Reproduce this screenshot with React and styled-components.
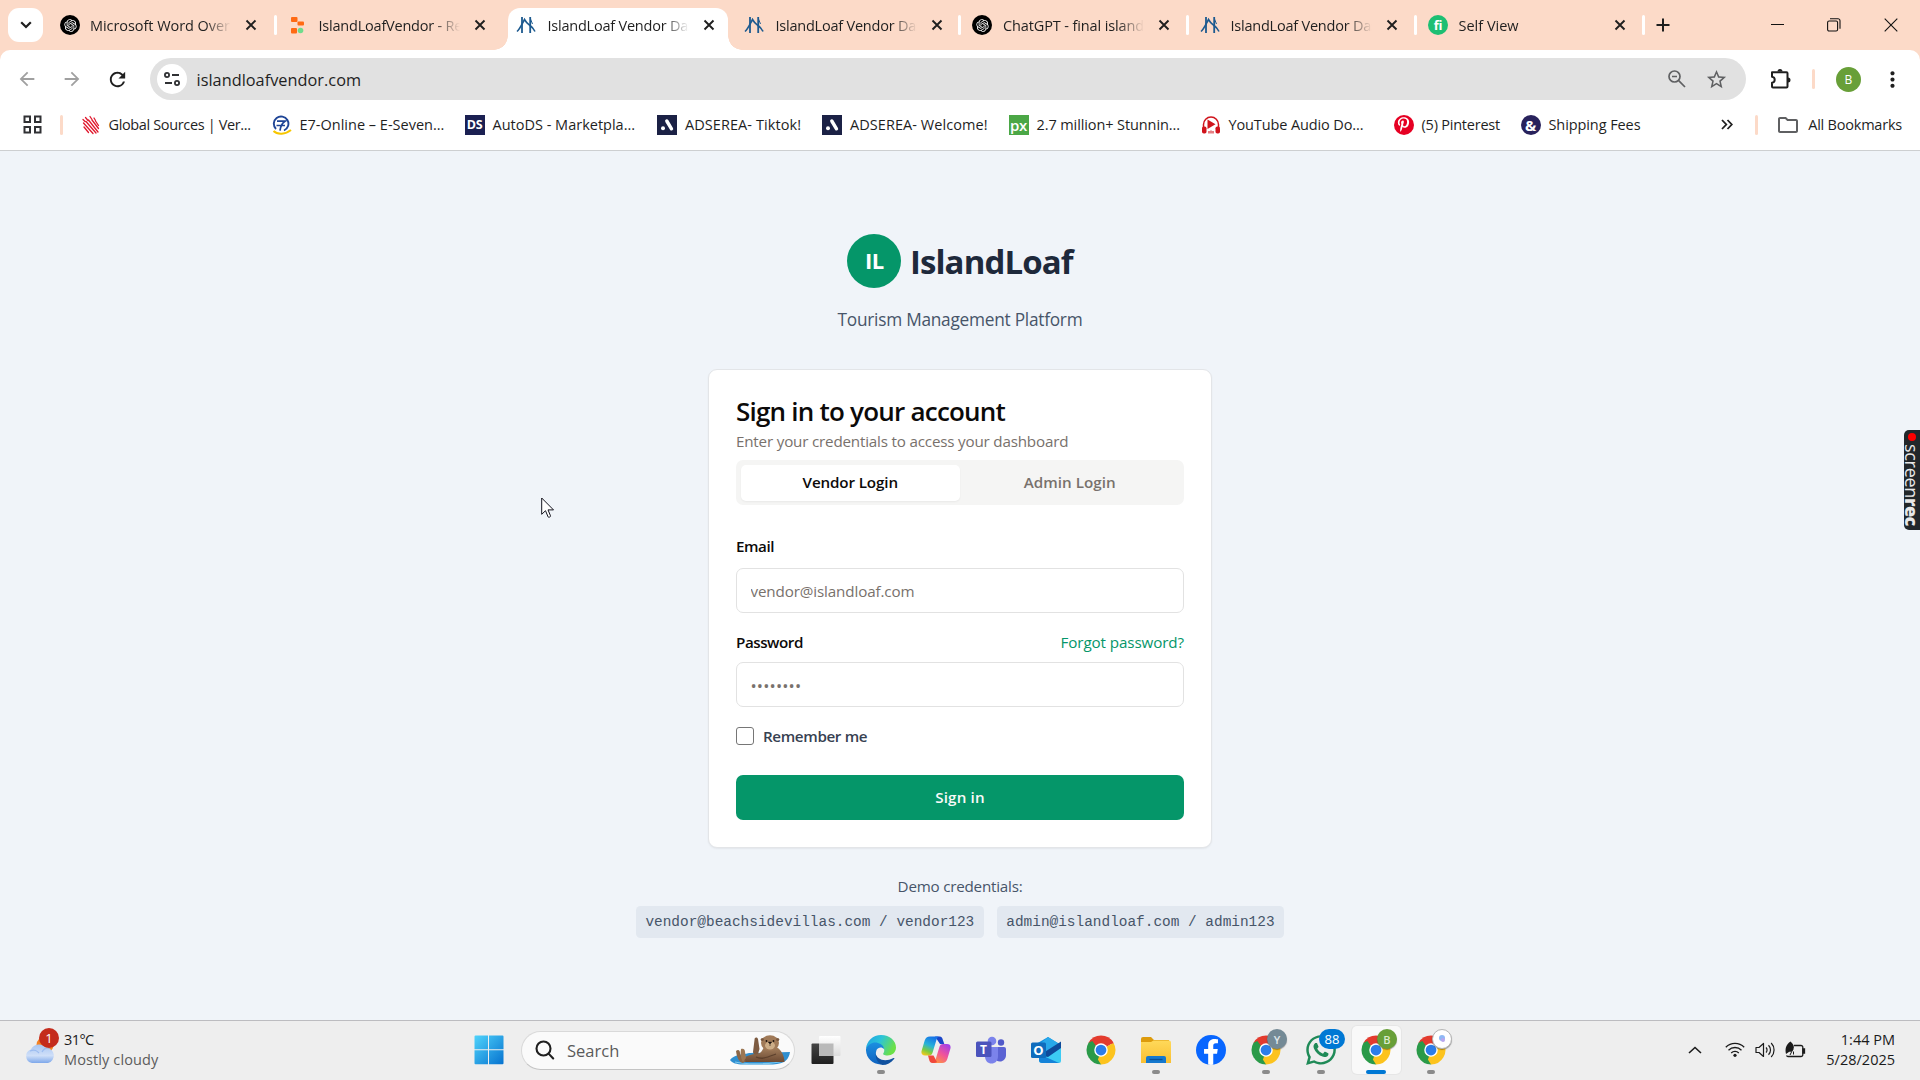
import React from 'react';
import styled, { createGlobalStyle, css } from 'styled-components';
import {
  MdArrowBack, MdArrowForward, MdRefresh, MdStarOutline, MdMoreVert, MdOutlineFolder,
} from 'react-icons/md';
import { FaPinterestP, FaFacebookF, FaWhatsapp } from 'react-icons/fa';
import { RiOpenaiFill } from 'react-icons/ri';

const GlobalStyle = createGlobalStyle`
  *, *::before, *::after { box-sizing: border-box; }
  body { margin: 0; overflow: hidden; font-family: "Open Sans", "Noto Sans", sans-serif; }
  svg { display: block; flex: none; }
`;

const Screen = styled.div`
  width: 1920px;
  height: 1080px;
  display: flex;
  flex-direction: column;
  background: #f0f4f9;
  position: relative;
  overflow: hidden;
`;

/* ---------- tab strip ---------- */
const TabStrip = styled.div`
  height: 50px;
  background: #fcdac8;
  display: flex;
  align-items: flex-start;
  padding: 8px 0 0 8px;
`;
const TabSearch = styled.div`
  width: 35px;
  height: 34px;
  border-radius: 11px;
  background: #fff;
  display: grid;
  place-items: center;
  margin-right: 4.5px;
`;
const Tab = styled.div`
  position: relative;
  width: 228px;
  height: 42px;
  display: flex;
  align-items: center;
  padding: 0 4px 8px 12px;
  &::after {
    content: '';
    position: absolute;
    right: -1px;
    top: 7px;
    width: 3px;
    height: 20px;
    border-radius: 2px;
    background: ${(p) => (p.$divider ? '#fff' : 'transparent')};
  }
  ${(p) => p.$active && css`
    width: 220px;
    margin: 0 4px;
    padding: 0 0 8px 8px;
    background: #fff;
    border-radius: 12px 12px 0 0;
    &::before {
      content: '';
      position: absolute;
      left: -14px;
      bottom: 0;
      width: 14px;
      height: 14px;
      background: radial-gradient(circle at 0 0, transparent 13.5px, #fff 14px);
    }
    &::after {
      right: -14px;
      top: auto;
      bottom: 0;
      width: 14px;
      height: 14px;
      border-radius: 0;
      background: radial-gradient(circle at 100% 0, transparent 13.5px, #fff 14px);
    }
  `}
`;
const Favicon = styled.span`
  flex: none;
  width: 21px;
  height: 20px;
  display: grid;
  place-items: center;
  margin-right: ${(p) => p.$gap ?? 10}px;
`;
const TabTitle = styled.span`
  width: 141px;
  padding-top: 1px;
  font-size: 14.5px;
  line-height: 22px;
  letter-spacing: ${(p) => p.$ls ?? -0.2}px;
  color: #1f1f1f;
  white-space: nowrap;
  overflow: hidden;
  mask-image: linear-gradient(90deg, #000 115px, transparent 141px);
`;
const TabClose = styled.span`
  width: 24px;
  display: grid;
  place-items: center;
  margin-left: 8px;
`;
const NewTab = styled.span`
  width: 24px;
  height: 34px;
  margin-left: 7px;
  display: grid;
  place-items: center;
`;
const WindowControls = styled.div`
  margin-left: auto;
  height: 34px;
  display: flex;
  align-items: center;
  padding-right: 22px;
  gap: 43px;
`;

/* ---------- toolbar ---------- */
const ToolbarBack = styled.div`
  background: #fcdac8;
`;
const Toolbar = styled.div`
  height: 58px;
  background: #fff;
  border-radius: 10px 10px 0 0;
  display: flex;
  align-items: center;
  padding: 0 15px 0 16px;
`;
const NavButton = styled.span`
  flex: none;
  width: 22px;
  display: grid;
  place-items: center;
  margin-right: ${(p) => p.$gap ?? 23}px;
  color: ${(p) => (p.$dim ? '#a0a0a0' : '#1f1f1f')};
`;
const AddressBar = styled.div`
  flex: none;
  width: 1596px;
  height: 42px;
  border-radius: 21px;
  background: #e1e1e1;
  display: flex;
  align-items: center;
  padding: 0 18px 0 6.5px;
`;
const SiteInfo = styled.span`
  width: 30px;
  height: 30px;
  border-radius: 50%;
  background: #fff;
  display: grid;
  place-items: center;
  margin-right: 10px;
`;
const Url = styled.span`
  flex: 1;
  padding-top: 1px;
  font-size: 16.3px;
  letter-spacing: 0.03px;
  color: #1f1f1f;
`;
const AddressAction = styled.span`
  color: #5f6062;
  margin-left: 18px;
`;
const Separator = styled.span`
  flex: none;
  width: 3px;
  height: 20px;
  border-radius: 2px;
  background: #fcdac8;
`;
const Puzzle = styled.span`
  margin: 0 20px 0 24px;
`;
const Profile = styled.span`
  flex: none;
  width: 25px;
  height: 25px;
  border-radius: 50%;
  background: #689f38;
  color: #fff;
  font-size: 12px;
  display: grid;
  place-items: center;
  margin: 0 auto 0 21px;
`;

/* ---------- bookmarks ---------- */
const BookmarkBar = styled.div`
  height: 43px;
  background: #fff;
  border-bottom: 1px solid #cdcfd1;
  display: flex;
  align-items: center;
  padding: 0 18px 9px 23px;
`;
const AppsGrid = styled.span`
  margin-right: 17.5px;
`;
const Bookmark = styled.span`
  width: ${(p) => p.$w}px;
  display: flex;
  align-items: center;
  gap: 8px;
  font-size: 14.5px;
  line-height: 22px;
  letter-spacing: ${(p) => p.$ls ?? 0}px;
  color: #1f1f1f;
  white-space: nowrap;
`;
const BookmarkList = styled.div`
  display: flex;
  margin-left: 18px;
`;
const BookmarkTail = styled.div`
  margin-left: auto;
  display: flex;
  align-items: center;
`;
const Overflow = styled.span`
  margin-right: 22px;
`;
const AllBookmarks = styled(Bookmark)`
  width: auto;
  margin-left: 18px;
`;
const IconTile = styled.span`
  width: 20px;
  height: 20px;
  border-radius: ${(p) => (p.$round ? '50%' : '0')};
  background: ${(p) => p.$bg};
  color: #fff;
  display: grid;
  place-items: center;
  overflow: hidden;
  font: ${(p) => p.$weight ?? 700} ${(p) => p.$size ?? 12}px/20px "Open Sans", sans-serif;
  letter-spacing: -0.3px;
`;

/* ---------- sign-in page ---------- */
const Page = styled.main`
  flex: 1;
  display: flex;
  flex-direction: column;
  align-items: center;
  padding-top: 83px;
`;
const Brand = styled.div`
  display: flex;
  align-items: center;
  gap: 8.5px;
  height: 54px;
  margin-bottom: 18px;
`;
const BrandMark = styled.div`
  width: 54px;
  height: 54px;
  border-radius: 50%;
  background: #059669;
  color: #fff;
  font-size: 22px;
  line-height: 53px;
  font-weight: 700;
  letter-spacing: -0.4px;
  text-align: center;
`;
const BrandName = styled.h1`
  margin: 0;
  padding-top: 1px;
  font-size: 33px;
  line-height: 54px;
  font-weight: 700;
  letter-spacing: -0.9px;
  color: #1e293b;
`;
const Tagline = styled.p`
  margin: 0 0 36px;
  font-size: 17.3px;
  line-height: 27px;
  letter-spacing: -0.26px;
  color: #475569;
`;
const Card = styled.section`
  width: 504px;
  height: 479px;
  border: 1px solid #e3e5e8;
  border-radius: 9px;
  background: #fff;
  box-shadow: 0 1px 2px rgba(0, 0, 0, 0.06);
  padding: 26px 27px;
  display: flex;
  flex-direction: column;
`;
const CardTitle = styled.h2`
  margin: 0 0 4px;
  font-size: 26px;
  line-height: 30px;
  font-weight: 600;
  letter-spacing: -0.78px;
  color: #0c0a09;
`;
const CardText = styled.p`
  margin: 0 0 8px;
  font-size: 15.2px;
  line-height: 22px;
  letter-spacing: -0.19px;
  color: #78716c;
`;
const LoginTabs = styled.div`
  height: 45px;
  border-radius: 7px;
  background: #f5f5f4;
  padding: 4.5px;
  display: grid;
  grid-template-columns: 1fr 1fr;
`;
const LoginTab = styled.div`
  border-radius: 5px;
  font-size: 15.2px;
  line-height: 35px;
  font-weight: 600;
  text-align: center;
  letter-spacing: ${(p) => (p.$active ? -0.13 : 0.03)}px;
  color: ${(p) => (p.$active ? '#0c0a09' : '#78716c')};
  background: ${(p) => (p.$active ? '#fff' : 'transparent')};
  box-shadow: ${(p) => (p.$active ? '0 1px 2px rgba(0,0,0,0.05)' : 'none')};
`;
const LabelRow = styled.div`
  height: 20px;
  display: flex;
  align-items: center;
  justify-content: space-between;
  margin-top: ${(p) => p.$top}px;
  margin-bottom: ${(p) => p.$bottom}px;
`;
const Label = styled.label`
  font-size: 15.2px;
  font-weight: 600;
  letter-spacing: -0.46px;
  color: #0c0a09;
`;
const Forgot = styled.a`
  font-size: 15.2px;
  letter-spacing: -0.1px;
  color: #059669;
`;
const Input = styled.input`
  height: 45px;
  width: 100%;
  border: 1px solid #e2e2e2;
  border-radius: 7px;
  padding: 1px 14px 0 13.5px;
  background: #fff;
  font: 400 ${(p) => p.$size ?? 15.2}px "Open Sans", sans-serif;
  letter-spacing: ${(p) => p.$ls}px;
  outline: none;
  &::placeholder { color: #78716c; opacity: 1; }
`;
const RememberRow = styled.div`
  height: 18px;
  display: flex;
  align-items: center;
  gap: 9px;
  margin: 20px 0 30px;
`;
const Checkbox = styled.span`
  width: 18px;
  height: 18px;
  border: 1px solid #767676;
  border-radius: 3px;
  background: #fff;
`;
const RememberLabel = styled(Label)`
  letter-spacing: -0.36px;
  color: #374151;
`;
const SignIn = styled.button`
  height: 45px;
  border: 0;
  border-radius: 7px;
  padding: 0 0 2px;
  background: #059669;
  color: #fafaf9;
  font: 600 15.2px "Open Sans", sans-serif;
  letter-spacing: 0.15px;
`;
const DemoTitle = styled.p`
  margin: 26px 0 8px;
  font-size: 15.2px;
  line-height: 24px;
  letter-spacing: -0.22px;
  color: #475569;
`;
const DemoRow = styled.div`
  display: flex;
  gap: 13px;
`;
const Credential = styled.code`
  height: 32px;
  padding: 0 9.5px;
  border-radius: 4.5px;
  background: #e2e8f0;
  color: #475569;
  font: 14.43px/32px "Liberation Mono", monospace;
`;
const Cursor = styled.svg`
  position: absolute;
  left: 541px;
  top: 497px;
`;
const Recorder = styled.div`
  position: absolute;
  right: 0;
  top: 430px;
  width: 16px;
  height: 100px;
  border-radius: 5px 0 0 5px;
  background: #22272b;
  color: #e8e8e8;
  writing-mode: vertical-rl;
  display: flex;
  align-items: center;
  padding-top: 3px;
  font: 400 18px/16px "Open Sans", sans-serif;
  letter-spacing: -0.3px;
`;
const RecDot = styled.span`
  width: 8px;
  height: 8px;
  border-radius: 50%;
  background: #f00;
  margin-bottom: 3px;
`;
const RecBold = styled.b`
  font-weight: 800;
  letter-spacing: -0.5px;
`;

/* ---------- taskbar ---------- */
const Taskbar = styled.footer`
  height: 60px;
  border-top: 1px solid #bcbcc0;
  background: #eeeeee;
  display: flex;
  align-items: center;
  padding: 0 25px 1px 25px;
`;
const Weather = styled.div`
  width: 449px;
  display: flex;
  align-items: center;
  gap: 9px;
`;
const TwoLines = styled.div`
  font-size: 14.5px;
  line-height: 20px;
  color: #1b1b1b;
  text-align: ${(p) => p.$align ?? 'left'};
`;
const Line = styled.div`
  letter-spacing: ${(p) => p.$ls ?? 0}px;
  color: ${(p) => (p.$muted ? '#5c5c5c' : 'inherit')};
`;
const SearchBox = styled.div`
  width: 274px;
  height: 39px;
  margin: 0 3.5px 0 17px;
  border: 1px solid #d9d9d9;
  border-bottom-color: #c4c4c4;
  border-radius: 20px;
  background: #fafafa;
  display: flex;
  align-items: center;
  padding: 0 3px 0 13px;
  font-size: 16.5px;
  color: #5a5a5a;
`;
const SearchLabel = styled.span`
  flex: 1;
  margin-left: 12px;
`;
const AppSlot = styled.div`
  position: relative;
  width: 55px;
  height: 48px;
  display: grid;
  place-items: center;
  ${(p) => p.$active && css`
    width: 49px;
    margin: 0 3px;
    border-radius: 5px;
    background: #f9f9f9;
    box-shadow: 0 0 0 1px #e6e6e6;
  `}
  &::after {
    content: '';
    position: absolute;
    bottom: 0;
    left: calc(50% - ${(p) => (p.$active ? 10 : 4)}px);
    width: ${(p) => (p.$active ? 20 : 8)}px;
    height: 4px;
    border-radius: 2px;
    background: ${(p) => (p.$active ? '#0078d4' : p.$running ? '#8a8a8a' : 'transparent')};
  }
`;
const Badge = styled.span`
  position: absolute;
  top: 3px;
  left: calc(50% + ${(p) => (p.$wide ? -2 : 1)}px);
  width: ${(p) => (p.$wide ? 26 : 20)}px;
  height: 20px;
  border-radius: 10px;
  background: ${(p) => p.$bg};
  color: ${(p) => p.$color ?? '#fff'};
  border: ${(p) => (p.$outline ? '1px solid #b5b5b5' : '0')};
  box-shadow: ${(p) => (p.$wide ? 'none' : '0 1px 1px rgba(0,0,0,.35)')};
  font-size: ${(p) => (p.$wide ? 13 : 11)}px;
  font-weight: ${(p) => (p.$wide ? 400 : 600)};
  display: grid;
  place-items: center;
`;
const Tray = styled.div`
  margin-left: auto;
  display: flex;
  align-items: center;
`;
const TrayIcon = styled.span`
  width: 30px;
  display: grid;
  place-items: center;
  margin-right: ${(p) => p.$gap ?? 0}px;
`;

/* ---------- drawings ---------- */
const CloseX = () => (
  <svg width="12" height="12" viewBox="0 0 12 12" stroke="#1f1f1f" strokeWidth="1.9">
    <path d="M1.5 1.5l9 9M10.5 1.5l-9 9" />
  </svg>
);
const OpenAiMark = () => (
  <IconTile $round $bg="#000"><RiOpenaiFill size={15} /></IconTile>
);
const ReplitMark = () => (
  <svg width="16" height="18" viewBox="0 0 16 18">
    <rect x="1" y="1" width="6.5" height="5" rx="1" fill="#ff6a13" />
    <rect x="7.5" y="5.5" width="6.5" height="4" rx="1" fill="#ff6a13" />
    <rect x="1" y="12" width="6" height="5.5" rx="1" fill="#ff6a13" />
    <circle cx="10.5" cy="14.5" r="2.8" fill="#6fdc8c" />
  </svg>
);
const LoafMark = () => (
  <svg width="20" height="18" viewBox="0 0 20 18" fill="none" stroke="#1d5a8f" strokeWidth="1.8">
    <path d="M6 1v16M14.200 1v16" />
    <path d="M1 15.500C4 13 6 8 8.500 3.500c2 3.500 3 4 5 5.500 2 1.500 4 3.500 5.500 6.500" strokeWidth="1.600" />
    <path d="M14.500 3l2 5" strokeWidth="1" />
  </svg>
);
const GlobalSources = () => (
  <svg width="20" height="20" viewBox="0 0 20 20" stroke="#e0182d" strokeWidth="1.5" fill="none" strokeLinecap="round">
    <path d="M2 4.500l2 2M4.500 2.500l2.500 3M9 1.500l2 3M13 3l1.500 2.500M2.500 8l9.500 10.500M5 6.500l10 11.500M7.500 5l9.500 12M11 5l6.500 8.500M14.500 6l3 4.500M3 12l4.500 5.500" strokeWidth="1.300" />
  </svg>
);
const SevenMark = () => (
  <svg width="20" height="20" viewBox="0 0 20 20" fill="none">
    <path d="M4 14a7.300 7.300 0 1 1 8 1.500" stroke="#1f4596" strokeWidth="1.900" />
    <path d="M5 6.200h8c-3 1.800-4.500 5-5 9.500M4.500 10.500h8.500" stroke="#1f4596" strokeWidth="1.700" />
    <path d="M1.500 16c4 4 12 3.500 17.500-1" stroke="#f7c600" strokeWidth="2" />
  </svg>
);
const AdsMark = () => (
  <IconTile $bg="#1b2145">
    <svg width="16" height="16" viewBox="0 0 16 16" stroke="#fff" strokeLinecap="round">
      <path d="M7.800 4l4.700 7.800" strokeWidth="3.400" />
      <circle cx="4" cy="11.300" r="2" fill="#fff" stroke="none" />
    </svg>
  </IconTile>
);
const YtAudio = () => (
  <svg width="20" height="20" viewBox="0 0 20 20">
    <path d="M2.500 13V9.500a7.500 7.500 0 0 1 15 0V13" fill="none" stroke="#d0141c" strokeWidth="1.500" />
    <rect x="1" y="11.500" width="4.500" height="7" rx="1.800" fill="#d0141c" />
    <rect x="14.500" y="11.500" width="4.500" height="7" rx="1.800" fill="#d0141c" />
    <path d="M6.500 4.500l8 4.700-8 4.700z" fill="#d0141c" />
    <path d="M8 16v2.500M10 15.500v3M12 16v2.500" stroke="#d0141c" strokeWidth="1.100" />
  </svg>
);
const PuzzlePiece = () => (
  <svg width="22" height="22" viewBox="0 0 22 22" fill="none" stroke="#1f1f1f" strokeWidth="2" strokeLinejoin="round">
    <path d="M2 4.200h14.500a1 1 0 0 1 1 1V18.500a1 1 0 0 1-1 1H3a1 1 0 0 1-1-1v-3.700c3.600-.4 3.600-5.600 0-6z" />
    <path d="M7.500 3.500a2.500 2.500 0 0 1 5 0zM18 9.500a2.500 2.500 0 0 1 0 5z" fill="#1f1f1f" stroke="none" />
  </svg>
);
const Chrome = () => (
  <svg width="30" height="30" viewBox="0 0 48 48">
    <path d="M24 24L4.080 12.500A23 23 0 0 1 43.920 12.500z" fill="#e33b2e" />
    <path d="M24 24L43.920 12.500A23 23 0 0 1 24 47z" fill="#fcc31e" />
    <path d="M24 24L24 47A23 23 0 0 1 4.080 12.500z" fill="#2a9a48" />
    <path d="M24 13.500H43.900L42 10 24 7z" fill="#e33b2e" />
    <path d="M33.090 29.250L24 47l-5-8 4-10z" fill="#fcc31e" />
    <path d="M14.910 29.250L4.080 12.500l6-3 6 8z" fill="#2a9a48" />
    <circle cx="24" cy="24" r="10.800" fill="#fff" />
    <circle cx="24" cy="24" r="8.600" fill="#2b7de9" />
  </svg>
);
const WindowsLogo = () => (
  <svg width="30" height="30" viewBox="0 0 30 30">
    <defs>
      <linearGradient id="win" x1="0" y1="0" x2="1" y2="1">
        <stop offset="0" stopColor="#4fd3fb" /><stop offset="1" stopColor="#0672cf" />
      </linearGradient>
    </defs>
    <path fill="url(#win)" d="M1.500.5H14v13.800H.5V1.500a1 1 0 0 1 1-1zM15 .5h13.500a1 1 0 0 1 1 1v12.800H15zM.5 15.300H14v14H1.500a1 1 0 0 1-1-1zM15 15.300h14.500v13a1 1 0 0 1-1 1H15z" />
  </svg>
);
const WeatherIcon = () => (
  <svg width="30" height="40" viewBox="0 0 30 40">
    <defs>
      <linearGradient id="cloud" x1="0" y1="0" x2="0" y2="1">
        <stop offset="0" stopColor="#a9c6f2" /><stop offset=".6" stopColor="#cfdff8" /><stop offset="1" stopColor="#7ea8ea" />
      </linearGradient>
    </defs>
    <circle cx="20" cy="19" r="8.500" fill="#f58220" />
    <path d="M7 37a7 7 0 0 1-1.200-13.500A9.500 9.500 0 0 1 21.500 22 7.600 7.600 0 0 1 23 37z" fill="url(#cloud)" />
    <path d="M5 25c5-2 7 0 9 2M17 26c2-4 5-4.500 8-4" stroke="#9cbcf0" strokeWidth="1.200" fill="none" />
  </svg>
);
const WeatherArt = styled.div`
  position: relative;
  width: 30px;
  height: 48px;
`;
const AlertDot = styled.span`
  position: absolute;
  left: 14px;
  top: 2px;
  width: 20px;
  height: 20px;
  border-radius: 50%;
  background: #c42b1c;
  color: #fff;
  font-size: 13px;
  line-height: 20px;
  text-align: center;
`;
const Otter = () => (
  <svg width="62" height="30" viewBox="0 0 62 30">
    <defs>
      <linearGradient id="fur" x1="0" y1="0" x2="0" y2="1">
        <stop offset="0" stopColor="#a5805d" /><stop offset="1" stopColor="#6c4a33" />
      </linearGradient>
    </defs>
    <path d="M1 25C6 19 12 20 20 18L61 17C60 24 56 29 44 29.500H14C8 29.500 3 28 1 25z" fill="#2f8fd0" />
    <path d="M6 27c10 2.500 38 2.500 48-1" stroke="#7cc8ee" strokeWidth="1.200" fill="none" />
    <path d="M11 27C16 20 24 19 31 18c2-2 2.500-3 3.500-5l13-1c5 3 8 9 8 15z" fill="url(#fur)" />
    <path d="M7 16c2-2 4-1 4 2l2 6 4 2-3 2c-4-1-6-5-7-12z" fill="#8a6546" />
    <path d="M12 14c3-1 4 1 4 3l1 6-3 4c-2-3-3-8-2-13z" fill="#9c7753" />
    <path d="M24 17l1.500-12c0-3 2.500-3 3.500-1l1.500 10-1.500 5c-3 1-5 0-5-2z" fill="#7d5b41" />
    <ellipse cx="41" cy="8" rx="9" ry="7.800" fill="#a07a58" />
    <ellipse cx="41" cy="10.500" rx="5" ry="4" fill="#cdae88" />
    <circle cx="33.300" cy="4.500" r="1.600" fill="#7a583e" />
    <circle cx="48.700" cy="4.500" r="1.600" fill="#7a583e" />
    <circle cx="37.500" cy="6" r=".9" fill="#1d1410" />
    <circle cx="44.500" cy="6" r=".9" fill="#1d1410" />
    <path d="M39.300 7h3.400l-1.700 2zM41 9v2" fill="#1d1410" stroke="#1d1410" strokeWidth=".6" />
    <path d="M27 22c6 3 12 0 20-3" stroke="#5d412d" strokeWidth="1.300" fill="none" />
  </svg>
);
const TaskView = () => (
  <svg width="30" height="30" viewBox="0 0 30 30">
    <defs>
      <linearGradient id="tv1" x1="0" y1="0" x2="0" y2="1"><stop offset="0" stopColor="#454545" /><stop offset="1" stopColor="#1f1f1f" /></linearGradient>
      <linearGradient id="tv2" x1="0" y1="0" x2="0" y2="1"><stop offset="0" stopColor="#fff" /><stop offset="1" stopColor="#dcdcdc" /></linearGradient>
    </defs>
    <rect x=".5" y="8.500" width="22" height="20.500" rx="1" fill="url(#tv1)" />
    <rect x="8" y="1" width="21.500" height="20" rx="1" fill="url(#tv2)" />
    <rect x="8" y="8.500" width="14.500" height="12.500" fill="#b9b9b9" />
  </svg>
);
const Edge = () => (
  <svg width="30" height="30" viewBox="0 0 30 30">
    <defs>
      <linearGradient id="eg1" x1="0" y1="0" x2="1" y2=".4"><stop offset="0" stopColor="#1d9fe4" /><stop offset=".5" stopColor="#2cc4d8" /><stop offset="1" stopColor="#6be048" /></linearGradient>
      <linearGradient id="eg2" x1="0" y1="0" x2="0" y2="1"><stop offset="0" stopColor="#1b8fe0" /><stop offset="1" stopColor="#0f62c0" /></linearGradient>
    </defs>
    <path d="M0 14C.5 6 7 0 15 0c9 0 15 6 15 12.500 0 5-4 8-8.500 8-3.500 0-5-1-4-2.500 1.500-2 1-5.500-2.500-7C10 8 3 9 0 14z" fill="url(#eg1)" />
    <path d="M0 14c2-5 7.500-7.500 12-6 4 1.200 6 3.500 6 6-2-2.500-6-2-7.500 1-2 5 1 10 6 13l3 .6C9 32-.5 24 0 14z" fill="url(#eg2)" />
    <path d="M10.500 15c-1.500 3-.5 6 2 8 4 3 9 3 15 0 .6-.3 1.200 0 .8.700C25 28 21 30 16.500 30c-5-1.500-8.500-8-6-15z" fill="#10519f" />
  </svg>
);
const Copilot = () => (
  <svg width="30" height="30" viewBox="0 0 30 30">
    <defs>
      <linearGradient id="cp1" x1=".6" y1="0" x2=".2" y2="1"><stop offset="0" stopColor="#1673e8" /><stop offset=".45" stopColor="#27b3d8" /><stop offset=".75" stopColor="#7ccb3f" /><stop offset="1" stopColor="#f7c81e" /></linearGradient>
      <linearGradient id="cp2" x1=".8" y1="0" x2=".2" y2="1"><stop offset="0" stopColor="#a33fe8" /><stop offset=".5" stopColor="#f0539b" /><stop offset="1" stopColor="#ff9440" /></linearGradient>
    </defs>
    <path d="M14 1.500h4.500c2.300 0 2.800 1.500 3.400 3.500l1.400 4H19z" fill="#1b46c8" />
    <path d="M9 1.500h9c-1.500.5-2 1.500-2.600 3.500l-3.800 12.500c-.6 2-1.500 3-3.600 3H4c-3 0-4.200-2-3.300-5l3-10C4.700 2.800 6 1.500 9 1.500z" fill="url(#cp1)" />
    <path d="M21 28h-9c1.500-.5 2-1.500 2.600-3.500L18.400 12c.6-2 1.500-3 3.600-3h4c3 0 4.200 2 3.300 5l-3 10C25.300 26.700 24 28 21 28z" fill="url(#cp2)" />
    <path d="M7 20.500h5.500L16 27c-1 .8-2 1-4.500 1-2.300 0-2.800-1.500-3.400-3.500z" fill="#f0483c" />
  </svg>
);
const AppLetter = styled.span`
  position: absolute;
  left: ${(p) => p.$x}px;
  top: ${(p) => p.$y}px;
  width: 15px;
  height: 15px;
  color: #fff;
  font: 700 ${(p) => p.$size}px/15px "Open Sans", sans-serif;
  text-align: center;
`;
const Teams = () => (
  <>
    <svg width="30" height="30" viewBox="0 0 30 30">
      <circle cx="16" cy="6" r="4.300" fill="#7b83eb" />
      <circle cx="25" cy="7.500" r="3.200" fill="#5059c9" />
      <path d="M20 12h8a2 2 0 0 1 2 2v6c0 4-3 6.500-6 6.500s-4-1-4-3z" fill="#5b63d3" />
      <path d="M9 12h13v9c0 5-3 7.500-6.500 7.500S9 26 9 21z" fill="#7b83eb" />
      <rect x="0" y="6.500" width="15.500" height="15.500" rx="1.500" fill="#4b53bc" />
    </svg>
    <AppLetter $x={12.5} $y={15.5} $size={12}>T</AppLetter>
  </>
);
const Outlook = () => (
  <>
    <svg width="30" height="30" viewBox="0 0 30 30">
      <path d="M5 9L17 2l13 8v5L9 22z" fill="#1490df" />
      <path d="M17 2l13 8-12 8-10-8z" fill="#28a8ea" />
      <path d="M9 20L30 6.500V16l-14 9z" fill="#0f4a9a" />
      <path d="M8 20l9 2 13-9v13a2 2 0 0 1-2 2H11a3 3 0 0 1-3-3z" fill="#3ccbf4" />
      <path d="M8 19l20 9H11a3 3 0 0 1-3-3z" fill="#1583d8" />
      <rect x="0" y="7.500" width="15" height="15.500" rx="1.500" fill="#0f6cbd" />
    </svg>
    <AppLetter $x={12.5} $y={16.5} $size={13}>O</AppLetter>
  </>
);
const Explorer = () => (
  <svg width="30" height="30" viewBox="0 0 30 30">
    <defs><linearGradient id="fo" x1="0" y1="0" x2="0" y2="1"><stop offset="0" stopColor="#ffd95a" /><stop offset="1" stopColor="#f9bf31" /></linearGradient></defs>
    <path d="M0 4a2 2 0 0 1 2-2h8l3 3h15v6H0z" fill="#dd9b0c" />
    <path d="M0 7h10l2.500-1.500H28a2 2 0 0 1 2 2V28H0z" fill="url(#fo)" />
    <path d="M5 28v-5a2 2 0 0 1 2-2h16a2 2 0 0 1 2 2v5z" fill="#1578ce" />
    <path d="M8.500 24.500h13" stroke="#0b4f96" strokeWidth="1.300" />
  </svg>
);
const FacebookDisc = styled.span`
  width: 30px;
  height: 30px;
  border-radius: 50%;
  background: #0866ff;
  color: #fff;
  display: flex;
  justify-content: center;
  align-items: flex-end;
  overflow: hidden;
`;

const TABS = [
  { title: 'Microsoft Word Over', icon: <OpenAiMark />, ls: -0.06, divider: true, gap: 9.5 },
  { title: 'IslandLoafVendor - Re', icon: <ReplitMark />, ls: -0.21 },
  { title: 'IslandLoaf Vendor Das', icon: <LoafMark />, ls: -0.22, active: true, gap: 11 },
  { title: 'IslandLoaf Vendor Das', icon: <LoafMark />, ls: -0.22, divider: true, gap: 11 },
  { title: 'ChatGPT - final island', icon: <OpenAiMark />, ls: -0.12, divider: true, gap: 10.5 },
  { title: 'IslandLoaf Vendor Das', icon: <LoafMark />, ls: -0.22, divider: true },
  { title: 'Self View', icon: <IconTile $round $bg="#1dbf73" $size={13}>fi</IconTile>, ls: 0, divider: true },
];

const BOOKMARKS = [
  { text: 'Global Sources | Ver...', w: 191, ls: -0.36, icon: <GlobalSources /> },
  { text: 'E7-Online – E-Seven...', w: 193, ls: 0, icon: <SevenMark /> },
  { text: 'AutoDS - Marketpla...', w: 192.5, ls: 0, icon: <IconTile $bg="#1b2052" $size={12.5}>DS</IconTile> },
  { text: 'ADSEREA- Tiktok!', w: 165, ls: 0.07, icon: <AdsMark /> },
  { text: 'ADSEREA- Welcome!', w: 186.5, ls: 0.06, icon: <AdsMark /> },
  { text: '2.7 million+ Stunnin...', w: 192, ls: -0.1, icon: <IconTile $bg="#4ba746" $size={15} $weight={600}>px</IconTile> },
  { text: 'YouTube Audio Do...', w: 193, ls: -0.12, icon: <YtAudio /> },
  { text: '(5) Pinterest', w: 127, ls: -0.22, icon: <IconTile $round $bg="#e60023"><FaPinterestP size={15} /></IconTile> },
  { text: 'Shipping Fees', w: 130, ls: -0.09, icon: <IconTile $round $bg="#28225c" $size={15}>&amp;</IconTile> },
];

const APPS = [
  { icon: <TaskView /> },
  { icon: <Edge />, running: true },
  { icon: <Copilot /> },
  { icon: <Teams /> },
  { icon: <Outlook /> },
  { icon: <Chrome /> },
  { icon: <Explorer />, running: true },
  { icon: <FacebookDisc><FaFacebookF size={26} /></FacebookDisc> },
  { icon: <Chrome />, running: true, badge: <Badge $bg="#748a96" $color="#dfe6ea">Y</Badge> },
  { icon: <FaWhatsapp size={34} color="#1f8a57" />, running: true, badge: <Badge $wide $bg="#0078d4">88</Badge> },
  { icon: <Chrome />, active: true, badge: <Badge $bg="#689f38" $color="#dcebcd">B</Badge> },
  {
    icon: <Chrome />,
    running: true,
    badge: (
      <Badge $bg="#fff" $outline>
        <svg width="10" height="10" viewBox="0 0 10 10"><circle cx="5" cy="4" r="3" fill="#8fb8f5" /><circle cx="6" cy="6" r="2" fill="#b9a6ee" /></svg>
      </Badge>
    ),
  },
];

export default function App() {
  return (
    <Screen>
      <GlobalStyle />
      <TabStrip>
        <TabSearch>
          <svg width="12" height="8" viewBox="0 0 12 8" fill="none" stroke="#1f1f1f" strokeWidth="2.200"><path d="M1.200 1.200L6 6l4.800-4.800" /></svg>
        </TabSearch>
        {TABS.map((t, i) => (
          <Tab key={i} $active={t.active} $divider={t.divider}>
            <Favicon $gap={t.gap}>{t.icon}</Favicon>
            <TabTitle $ls={t.ls}>{t.title}</TabTitle>
            <TabClose><CloseX /></TabClose>
          </Tab>
        ))}
        <NewTab>
          <svg width="14" height="14" viewBox="0 0 14 14" stroke="#1f1f1f" strokeWidth="2"><path d="M7 .5v13M.5 7h13" /></svg>
        </NewTab>
        <WindowControls>
          <svg width="13" height="13" viewBox="0 0 13 13" stroke="#111" strokeWidth="1"><path d="M0 5.500h13" /></svg>
          <svg width="14" height="14" viewBox="0 0 14 14" fill="none" stroke="#111" strokeWidth="1.100">
            <rect x=".6" y="3" width="10" height="10" rx="1.500" />
            <path d="M3 .8h8a2 2 0 0 1 2 2v8" />
          </svg>
          <svg width="14" height="14" viewBox="0 0 14 14" stroke="#111" strokeWidth="1.100"><path d="M.7.7l12.600 12.600M13.300.7L.7 13.300" /></svg>
        </WindowControls>
      </TabStrip>

      <ToolbarBack>
        <Toolbar>
          <NavButton $dim><MdArrowBack size={22} /></NavButton>
          <NavButton $dim><MdArrowForward size={22} /></NavButton>
          <NavButton $gap={22}><MdRefresh size={23} /></NavButton>
          <AddressBar>
            <SiteInfo>
              <svg width="16" height="14" viewBox="0 0 16 14" fill="none" stroke="#303134" strokeWidth="1.800">
                <circle cx="3" cy="3" r="2.100" /><path d="M8 3h7M1 11h7" /><circle cx="13" cy="11" r="2.100" />
              </svg>
            </SiteInfo>
            <Url>islandloafvendor.com</Url>
            <AddressAction>
              <svg width="20" height="20" viewBox="0 0 20 20" fill="none" stroke="#5f6062" strokeWidth="1.700">
                <circle cx="7.500" cy="7.500" r="5.500" /><path d="M11.700 11.700l6.300 6.300M5 7.500h5" />
              </svg>
            </AddressAction>
            <AddressAction><MdStarOutline size={23} /></AddressAction>
          </AddressBar>
          <Puzzle><PuzzlePiece /></Puzzle>
          <Separator />
          <Profile>B</Profile>
          <MdMoreVert size={25} color="#1f1f1f" />
        </Toolbar>
      </ToolbarBack>

      <BookmarkBar>
        <AppsGrid>
          <svg width="19" height="19" viewBox="0 0 19 19" fill="none" stroke="#303134" strokeWidth="2">
            <rect x="1.500" y="1.500" width="5.500" height="5.500" /><rect x="12" y="1.500" width="5.500" height="5.500" />
            <rect x="1.500" y="12" width="5.500" height="5.500" /><rect x="12" y="12" width="5.500" height="5.500" />
          </svg>
        </AppsGrid>
        <Separator />
        <BookmarkList>
          {BOOKMARKS.map((b) => (
            <Bookmark key={b.text} $w={b.w} $ls={b.ls}>{b.icon}{b.text}</Bookmark>
          ))}
        </BookmarkList>
        <BookmarkTail>
          <Overflow>
            <svg width="12" height="11" viewBox="0 0 12 11" fill="none" stroke="#1f1f1f" strokeWidth="1.800"><path d="M1 1l4.300 4.500L1 10M6.500 1l4.300 4.500L6.500 10" /></svg>
          </Overflow>
          <Separator />
          <AllBookmarks $ls={-0.22}><MdOutlineFolder size={24} color="#5f6062" />All Bookmarks</AllBookmarks>
        </BookmarkTail>
      </BookmarkBar>

      <Page>
        <Brand>
          <BrandMark>IL</BrandMark>
          <BrandName>IslandLoaf</BrandName>
        </Brand>
        <Tagline>Tourism Management Platform</Tagline>
        <Card>
          <CardTitle>Sign in to your account</CardTitle>
          <CardText>Enter your credentials to access your dashboard</CardText>
          <LoginTabs>
            <LoginTab $active>Vendor Login</LoginTab>
            <LoginTab>Admin Login</LoginTab>
          </LoginTabs>
          <LabelRow $top={31} $bottom={12}><Label>Email</Label></LabelRow>
          <Input placeholder="vendor@islandloaf.com" $ls={-0.13} />
          <LabelRow $top={19} $bottom={10}>
            <Label>Password</Label>
            <Forgot>Forgot password?</Forgot>
          </LabelRow>
          <Input placeholder="••••••••" $size={16.5} $ls={0.15} />
          <RememberRow>
            <Checkbox />
            <RememberLabel>Remember me</RememberLabel>
          </RememberRow>
          <SignIn>Sign in</SignIn>
        </Card>
        <DemoTitle>Demo credentials:</DemoTitle>
        <DemoRow>
          <Credential>vendor@beachsidevillas.com / vendor123</Credential>
          <Credential>admin@islandloaf.com / admin123</Credential>
        </DemoRow>
      </Page>

      <Taskbar>
        <Weather>
          <WeatherArt>
            <WeatherIcon />
            <AlertDot>1</AlertDot>
          </WeatherArt>
          <TwoLines>
            <Line $ls={-0.6}>31°C</Line>
            <Line $muted $ls={0.12}>Mostly cloudy</Line>
          </TwoLines>
        </Weather>
        <WindowsLogo />
        <SearchBox>
          <svg width="20" height="20" viewBox="0 0 20 20" fill="none" stroke="#1f1f1f" strokeWidth="2.100" strokeLinecap="round">
            <circle cx="8.500" cy="8.500" r="7" /><path d="M13.600 13.600l4.600 4.900" />
          </svg>
          <SearchLabel>Search</SearchLabel>
          <Otter />
        </SearchBox>
        {APPS.map((a, i) => (
          <AppSlot key={i} $running={a.running} $active={a.active}>{a.icon}{a.badge}</AppSlot>
        ))}
        <Tray>
          <TrayIcon $gap={10}>
            <svg width="14" height="8" viewBox="0 0 14 8" fill="none" stroke="#1b1b1b" strokeWidth="1.600"><path d="M1 7l6-5.500L13 7" /></svg>
          </TrayIcon>
          <TrayIcon>
            <svg width="20" height="16" viewBox="0 0 20 16" fill="none" stroke="#1b1b1b" strokeWidth="1.300">
              <path d="M.8 5.200a13 13 0 0 1 18.400 0M3.500 8.200a9.200 9.200 0 0 1 13 0M6.200 11a5.400 5.400 0 0 1 7.600 0" />
              <circle cx="10" cy="13.300" r="1.600" fill="#1b1b1b" stroke="none" />
            </svg>
          </TrayIcon>
          <TrayIcon>
            <svg width="21" height="16" viewBox="0 0 21 16" fill="none" stroke="#1b1b1b" strokeWidth="1.200">
              <path d="M1 5.500h3L8.500 1.500v13L4 10.500H1z" strokeLinejoin="round" />
              <path d="M11 5.500a3.500 3.500 0 0 1 0 5M13.500 3.300a6.500 6.500 0 0 1 0 9.400M16.200 1a10 10 0 0 1 0 14" />
            </svg>
          </TrayIcon>
          <TrayIcon $gap={16}>
            <svg width="21" height="18" viewBox="0 0 21 18" fill="none" stroke="#1b1b1b" strokeWidth="1.300">
              <path d="M9 4.500h7a1.800 1.800 0 0 1 1.800 1.800v7.400a1.800 1.800 0 0 1-1.800 1.800H3a1.800 1.800 0 0 1-1.500-1" />
              <path d="M18 8h1.500v4H18z" fill="#1b1b1b" />
              <path d="M5.500 0.500c3 2.500 4 5 3 7.500-.7 2-2.300 2.800-4.300 2.800L1 13C0 8 .5 4 5.500.500z" fill="#1b1b1b" stroke="none" />
              <path d="M8 8l-3 6M8.500 10.500v3" strokeWidth="1" />
            </svg>
          </TrayIcon>
          <TwoLines $align="right">
            <Line>1:44 PM</Line>
            <Line>5/28/2025</Line>
          </TwoLines>
        </Tray>
      </Taskbar>

      <Cursor width="14" height="22" viewBox="0 0 14 22">
        <path d="M.7 1v16.300l3.800-3.600 2.600 6.200c.4.900 2.800 0 2.400-1.100L7 12.900h5.500z" fill="#fff" stroke="#14141e" strokeWidth="1" />
      </Cursor>
      <Recorder>
        <RecDot />
        <span>screen</span>
        <RecBold>rec</RecBold>
      </Recorder>
    </Screen>
  );
}
